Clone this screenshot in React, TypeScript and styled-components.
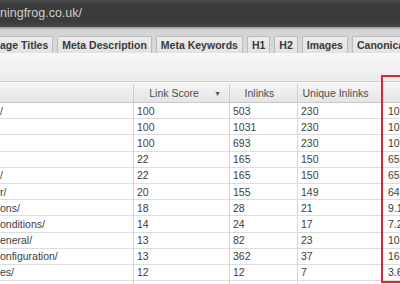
import React from "react";
import styled, { createGlobalStyle } from "styled-components";

const GlobalStyle = createGlobalStyle`
  html, body {
    margin: 0;
    padding: 0;
    background: #ffffff;
    overflow: hidden;
  }
  body {
    font-family: "Liberation Sans", Arial, sans-serif;
  }
`;

type Row = {
  url: string;
  score: string;
  inlinks: string;
  unique: string;
  pct: string;
};

const rows: Row[] = [
  { url: "/", score: "100", inlinks: "503", unique: "230", pct: "10" },
  { url: "", score: "100", inlinks: "1031", unique: "230", pct: "10" },
  { url: "", score: "100", inlinks: "693", unique: "230", pct: "10" },
  { url: "", score: "22", inlinks: "165", unique: "150", pct: "65" },
  { url: "/", score: "22", inlinks: "165", unique: "150", pct: "65" },
  { url: "r/", score: "20", inlinks: "155", unique: "149", pct: "64" },
  { url: "ons/", score: "18", inlinks: "28", unique: "21", pct: "9.1" },
  { url: "onditions/", score: "14", inlinks: "24", unique: "17", pct: "7.2" },
  { url: "eneral/", score: "13", inlinks: "82", unique: "23", pct: "10" },
  { url: "onfiguration/", score: "13", inlinks: "362", unique: "37", pct: "16" },
  { url: "es/", score: "12", inlinks: "12", unique: "7", pct: "3.6" },
  { url: "", score: "", inlinks: "", unique: "", pct: "" },
];

const tabs = [
  "age Titles",
  "Meta Description",
  "Meta Keywords",
  "H1",
  "H2",
  "Images",
  "Canonicals",
];

const App = () => {
  return (
    <Page>
      <GlobalStyle />
      <AddressBar>
        <Url>ningfrog.co.uk/</Url>
      </AddressBar>
      <TabStrip>
        {tabs.map((t, i) => (
          <Tab key={t} $first={i === 0}>
            {t}
          </Tab>
        ))}
      </TabStrip>
      <Toolbar />
      <Table>
        <HeaderRow>
          <HeaderCell $first />
          <HeaderCell>
            <HeaderLabel>Link Score</HeaderLabel>
            <SortArrow>▼</SortArrow>
          </HeaderCell>
          <HeaderCell>
            <HeaderLabel>Inlinks</HeaderLabel>
          </HeaderCell>
          <HeaderCell>
            <HeaderLabel>Unique Inlinks</HeaderLabel>
          </HeaderCell>
          <HeaderCell />
        </HeaderRow>
        {rows.map((r, i) => (
          <BodyRow key={i}>
            <Cell $first>{r.url}</Cell>
            <Cell>{r.score}</Cell>
            <Cell>{r.inlinks}</Cell>
            <Cell>{r.unique}</Cell>
            <Cell $last>{r.pct}</Cell>
          </BodyRow>
        ))}
      </Table>
      <Highlight />
    </Page>
  );
};

export default App;

const Page = styled.div`
  position: relative;
  width: 400px;
  height: 284px;
  overflow: hidden;
  background: #ffffff;
`;

const AddressBar = styled.div`
  height: 27px;
  box-sizing: border-box;
  display: flex;
  align-items: center;
  padding-bottom: 2px;
  background: linear-gradient(
    #4c4c4c 0px,
    #3b3b3b 4px,
    #3b3b3b 21px,
    #474747 27px
  );
`;

const Url = styled.span`
  font-size: 12.5px;
  color: #cdcdcd;
  white-space: nowrap;
`;

const TabStrip = styled.div`
  height: 26px;
  box-sizing: border-box;
  display: flex;
  align-items: flex-end;
  gap: 4px;
  padding-top: 9px;
  background: linear-gradient(#9a9a9a 0px, #d4d4d4 3px, #d9d9d9 100%);
  overflow: hidden;
`;

const Tab = styled.div<{ $first?: boolean }>`
  flex: none;
  height: 17px;
  box-sizing: border-box;
  display: flex;
  align-items: center;
  padding: 0 4px;
  margin-left: ${(p) => (p.$first ? "-5px" : "0")};
  border: 1px solid #bcbcbc;
  border-bottom: none;
  border-radius: 2px 2px 0 0;
  background: linear-gradient(#ececec, #e2e2e2);
  font-size: 10.5px;
  font-weight: bold;
  color: #3a3a3a;
  white-space: nowrap;
`;

const Toolbar = styled.div`
  height: 29px;
  border-top: 1px solid #f9f9f9;
  border-bottom: 1px solid #c4d9b0;
  box-sizing: border-box;
  background: linear-gradient(#f7f7f7, #ececec);
  margin-bottom: 1px;
`;

const Table = styled.div`
  display: flex;
  flex-direction: column;
  border-top: 1px solid #eef3e8;
`;

const columns = "133px 96px 68px 84px 1fr";

const HeaderRow = styled.div`
  display: grid;
  grid-template-columns: ${columns};
  height: 19px;
  box-sizing: border-box;
  border-bottom: 1px solid #c9c9c9;
  background: linear-gradient(#f4f4f4, #e5e5e5);
`;

const HeaderCell = styled.div<{ $first?: boolean }>`
  display: flex;
  align-items: center;
  padding-right: 8px;
  border-left: ${(p) => (p.$first ? "none" : "1px solid #cdcdcd")};
  font-size: 10.5px;
  color: #4c4c4c;
  white-space: nowrap;
  overflow: hidden;
`;

const HeaderLabel = styled.span`
  flex: 1;
  text-align: center;
`;

const SortArrow = styled.span`
  font-size: 7px;
  color: #555555;
`;

const BodyRow = styled.div`
  display: grid;
  grid-template-columns: ${columns};
  height: 16.2px;
  box-sizing: border-box;
  border-bottom: 1px solid #dcdcdc;
`;

const Cell = styled.div<{ $first?: boolean; $last?: boolean }>`
  display: flex;
  align-items: center;
  padding-left: ${(p) => (p.$first ? "0" : p.$last ? "6px" : "3px")};
  border-left: ${(p) => (p.$first ? "none" : "1px solid #d6d6d6")};
  font-size: 10.5px;
  color: #3c3c3c;
  white-space: nowrap;
  overflow: hidden;
`;

const Highlight = styled.div`
  position: absolute;
  left: 381px;
  top: 75px;
  width: 40px;
  height: 208px;
  box-sizing: border-box;
  border: 2px solid #e2232b;
  pointer-events: none;
`;
